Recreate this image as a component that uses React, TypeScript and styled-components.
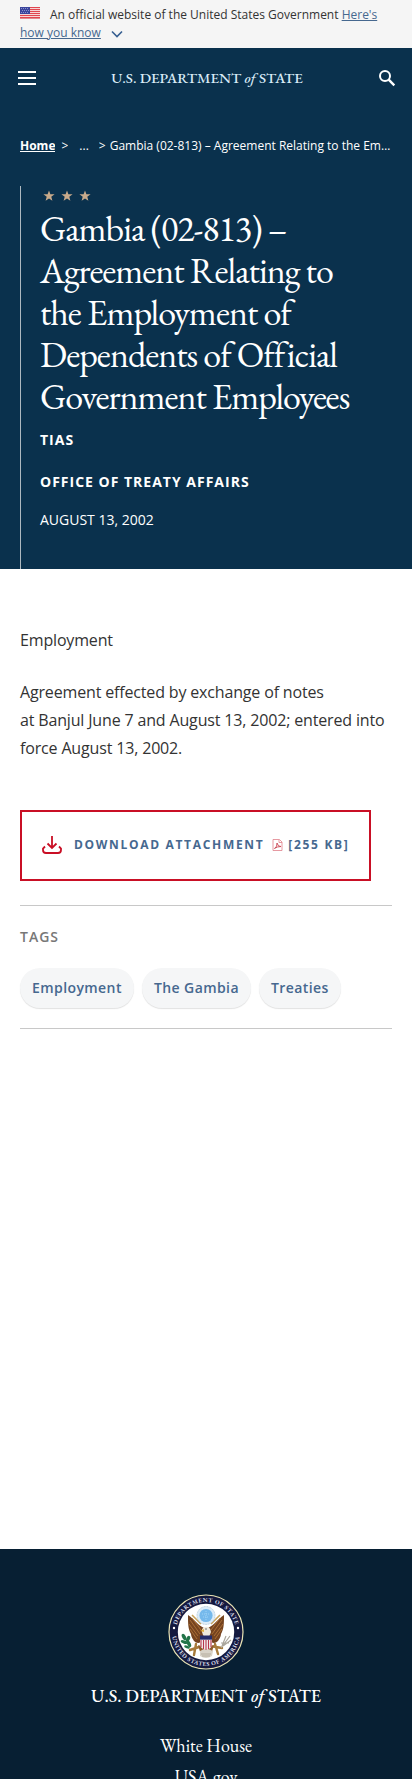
import React from "react";
import styled, { createGlobalStyle } from "styled-components";

const sans = `"Open Sans", "Noto Sans", sans-serif`;
const serif = `"EB Garamond", "Liberation Serif", serif`;
const navy = "#0a314d";
const link = "#46688f";
const red = "#c90f25";

const GlobalStyle = createGlobalStyle`
  *, *::before, *::after { box-sizing: border-box; }
  body { margin: 0; background: #fff; color: #333; font-family: ${sans}; }
  h1, p, ul, ol { margin: 0; padding: 0; }
  ul, ol { list-style: none; }
`;

const Page = styled.div`
  display: flex;
  flex-direction: column;
  height: 100vh;
  overflow: hidden;
`;

const Banner = styled.aside`
  flex: none;
  padding: 6px 20px;
  background: #f5f5f5;
  font-size: 12px;
  line-height: 18px;
`;

const Flag = styled.svg`
  width: 20px;
  height: 12px;
  margin-right: 10px;
`;

const BannerLink = styled.a`
  color: ${link};
  text-decoration: underline;
`;

const Chevron = styled.svg`
  width: 12px;
  height: 8px;
  margin-left: 10px;
  vertical-align: -1px;
`;

const Masthead = styled.div`
  flex: none;
  background: ${navy};
  color: #fff;
`;

const Header = styled.header`
  display: flex;
  align-items: center;
  justify-content: space-between;
  height: 60px;
  padding: 0 16px 0 18px;
`;

const IconButton = styled.button`
  display: flex;
  padding: 0;
  border: 0;
  background: none;
  color: #fff;
  cursor: pointer;
`;

const Wordmark = styled.a<{ $large?: boolean }>`
  color: ${(p) => (p.$large ? "#fff" : "#d9ebf7")};
  font-family: ${serif};
  font-size: ${(p) => (p.$large ? 18 : 15)}px;
  font-weight: 500;
  line-height: 24px;
  text-decoration: none;
  white-space: nowrap;
`;

const Breadcrumbs = styled.nav`
  padding: 28px 20px;

  ol {
    display: flex;
    font-size: 12px;
    line-height: 20px;
  }
`;

const Crumb = styled.li<{ $gap?: number; $current?: boolean }>`
  flex: ${(p) => (p.$current ? "1" : "none")};
  min-width: 0;
  margin-right: ${(p) => p.$gap ?? 0}px;
  overflow: hidden;
  text-overflow: ellipsis;
  white-space: nowrap;

  a {
    color: #fff;
    font-weight: 700;
  }
`;

const Hero = styled.section`
  margin: 2px 20px 0;
  padding: 3px 20px 38px 19px;
  border-left: 1px solid #aeb9c0;
`;

const Stars = styled.svg`
  display: block;
  width: 52px;
  height: 14px;
`;

const Title = styled.h1`
  margin: 5px 0 11px;
  font-family: ${serif};
  font-size: 36px;
  font-weight: 400;
  letter-spacing: -1px;
  line-height: 42px;
`;

const Office = styled.p`
  margin-bottom: 20px;
  font-size: 14px;
  font-weight: 700;
  letter-spacing: 1px;
  line-height: 22px;
  text-transform: uppercase;

  &:last-of-type { margin-bottom: 16px; }
`;

const Published = styled.time`
  display: block;
  font-size: 14px;
  line-height: 22px;
  text-transform: uppercase;
`;

const Content = styled.main`
  flex: none;
  padding: 57px 20px 520px;
`;

const Copy = styled.p`
  font-size: 16px;
  letter-spacing: -0.01em;
  line-height: 28px;

  & + & { margin-top: 24px; }
`;

const Download = styled.a`
  display: inline-flex;
  align-items: center;
  margin-top: 48px;
  padding: 0 20px 2px;
  height: 71px;
  border: 2px solid ${red};
  color: ${link};
  font-size: 12px;
  font-weight: 700;
  letter-spacing: 0.14em;
  line-height: 20px;
  text-decoration: none;
  text-transform: uppercase;
  white-space: nowrap;
`;

const DownloadLabel = styled.span`
  margin: 0 8px 0 12px;
`;

const FileSize = styled.span`
  margin-left: 5px;
`;

const Tags = styled.section`
  margin-top: 24px;
  padding: 20px 0;
  border: solid #c8c8c8;
  border-width: 1px 0;
`;

const TagsHeading = styled.h2`
  margin: 0;
  color: #777;
  font-size: 14px;
  font-weight: 600;
  letter-spacing: 1px;
  line-height: 22px;
`;

const TagList = styled.ul`
  display: flex;
  flex-wrap: wrap;
  gap: 8px;
  margin-top: 20px;
`;

const Tag = styled.a`
  display: block;
  padding: 9px 12px;
  border-radius: 20px;
  background: #f5f6f7;
  box-shadow: 0 1px 1px #e2e2e2;
  color: ${link};
  font-size: 14px;
  font-weight: 600;
  letter-spacing: 0.03em;
  line-height: 22px;
  text-decoration: none;
`;

const Footer = styled.footer`
  flex: none;
  display: flex;
  flex-direction: column;
  align-items: center;
  padding: 45px 20px 40px;
  background: #071f33;
  color: #fff;
`;

const SealArt = styled.svg`
  width: 76px;
  height: 76px;
  margin-bottom: 14px;
`;

const FooterLinks = styled.ul`
  margin-top: 22px;
  font-family: ${serif};
  font-size: 18px;
  line-height: 31px;
  text-align: center;

  a {
    color: #fff;
    text-decoration: none;
  }
`;

const starPath = "M0-5.6 1.4-1.8 5.6-1.7 2.3 .8 3.4 4.8 0 2.5-3.4 4.8-2.3 .8-5.6-1.7-1.4-1.8Z";

function UsFlag() {
  return (
    <Flag viewBox="0 0 20 12" aria-label="U.S. flag" role="img">
      <rect width="20" height="12" fill="#f6d5d5" />
      {[0, 2, 4, 6, 8, 10].map((y) => (
        <rect key={y} y={y} width="20" height="1" fill="#e0454f" />
      ))}
      <rect y="11" width="20" height="1" fill="#e58a8f" />
      <rect width="10" height="7" fill="#3b459c" />
      {[1, 3, 5].map((y) =>
        [1, 3, 5, 7].map((x) => <rect key={`${x}-${y}`} x={x + (y === 3 ? 1 : 0)} y={y} width="1" height="1" fill="#8790cf" />)
      )}
    </Flag>
  );
}

function Wing() {
  return (
    <g>
      <path d="M-2-4C-8-7-11-12-18-17-18-9-18-3-15 2-15 5-13 7-12 9-9 12-6 11-3 9Z" fill="#75431f" />
      <path d="M-16-12-6 2M-17-8-8 4M-16-3-9 7M-14-14-5-2" stroke="#b77a3c" strokeWidth=".8" fill="none" />
      <path d="M-5-8-14-17" stroke="#c9a35a" strokeWidth="1.6" />
    </g>
  );
}

function Seal() {
  return (
    <SealArt viewBox="-38 -38 76 76" role="img" aria-label="Seal of the U.S. Department of State">
      <defs>
        <path id="ring-top" d="M-30 0A30 30 0 0 1 30 0" />
        <path id="ring-bottom" d="M-34 0A34 34 0 0 0 34 0" />
      </defs>
      <circle r="37" fill="#14193f" stroke="#e9e3b4" strokeWidth="1.2" />
      <circle r="28.2" fill="#fff" />
      <g fill="#d5d8e6" fontFamily={serif} fontSize="6" fontWeight="700" letterSpacing=".5" textAnchor="middle">
        <text><textPath href="#ring-top" startOffset="50%">DEPARTMENT OF STATE</textPath></text>
        <text><textPath href="#ring-bottom" startOffset="50%">UNITED STATES OF AMERICA</textPath></text>
      </g>
      <circle cx="-32" cy="-4" r="1.2" fill="#fff" />
      <circle cx="32" cy="-4" r="1.2" fill="#fff" />
      <Wing />
      <g transform="scale(-1 1)"><Wing /></g>
      <circle cy="-16.5" r="9" fill="#dcecf8" stroke="#a7bfd2" strokeWidth=".8" strokeDasharray="1 .6" />
      <circle cy="-16.5" r="6.6" fill="#75b9ec" />
      <path d="M-4-18H4M-3-15H3M0-21V-12" stroke="#a9d8f7" strokeWidth=".8" strokeDasharray="1 1" />
      <path d="M-4 14-16 18M4 14 16 16M-10 12-12 23M9 12 12 22" stroke="#a77a3a" strokeWidth="2.4" strokeLinecap="round" />
      <path d="M-8 13Q0 20 8 13L5 23H-5Z" fill="#8f5b2c" />
      <path d="M-6 19Q0 15 7 19L6 24Q0 28-6 24Z" fill="#d9d3c8" />
      <path d="M-5 22H5M-4 24H4" stroke="#a89d8c" strokeWidth=".7" />
      <path d="M-3 3Q-6-4-1-5 4-6 5 0L3 5Z" fill="#eeeade" />
      <path d="M-2-3-6-1-2 0Z" fill="#e1b042" />
      <circle cx="0" cy="-3" r=".7" fill="#444" />
      <path d="M-6 5H6V13Q5 17 0 18-5 17-6 13Z" fill="#f4f0f1" />
      <path d="M-5 8V15M-2.5 8V17M0 8V18M2.5 8V17M5 8V15" stroke="#b7354b" strokeWidth="1.1" />
      <rect x="-6" y="3.5" width="12" height="4.2" fill="#252d6b" />
      <g fill="#237449">
        <ellipse cx="-22" cy="5" rx="1.8" ry="3.4" transform="rotate(-30 -22 5)" />
        <ellipse cx="-18" cy="7" rx="1.8" ry="3.4" transform="rotate(25 -18 7)" />
        <ellipse cx="-22" cy="10" rx="1.6" ry="3.4" transform="rotate(-70 -22 10)" />
        <ellipse cx="-17" cy="12" rx="1.8" ry="3.4" transform="rotate(-25 -17 12)" />
        <ellipse cx="-19" cy="15" rx="1.4" ry="3" transform="rotate(-70 -19 15)" />
      </g>
      <path d="M15 16 24 4M16 14 20 4M17 14 25 8M15 11 23 11" stroke="#aaa69c" strokeWidth="1.2" />
    </SealArt>
  );
}

export default function App() {
  return (
    <>
      <GlobalStyle />
      <Page>
        <Banner>
          <UsFlag />
          An official website of the United States Government{" "}
          <BannerLink href="#how-you-know">Here's how you know</BannerLink>
          <Chevron viewBox="0 0 12 8" aria-hidden="true">
            <path d="M1 1.5 6 6.5 11 1.5" fill="none" stroke="#365f91" strokeWidth="1.6" />
          </Chevron>
        </Banner>

        <Masthead>
          <Header>
            <IconButton type="button" aria-label="Menu">
              <svg width="18" height="14" viewBox="0 0 18 14">
                <path d="M0 1H18M0 7H18M0 13H18" stroke="currentColor" strokeWidth="2" />
              </svg>
            </IconButton>
            <Wordmark href="#home">U.S. DEPARTMENT <em>of</em> STATE</Wordmark>
            <IconButton type="button" aria-label="Search">
              <svg width="18" height="18" viewBox="0 0 18 18" fill="none" stroke="currentColor">
                <circle cx="7" cy="7" r="5" strokeWidth="2" />
                <path d="M10.7 10.7 16.3 16.3" strokeWidth="2.4" />
              </svg>
            </IconButton>
          </Header>

          <Breadcrumbs aria-label="Breadcrumb">
            <ol>
              <Crumb $gap={6}><a href="#home">Home</a></Crumb>
              <Crumb $gap={11} aria-hidden="true">&gt;</Crumb>
              <Crumb $gap={10}>...</Crumb>
              <Crumb $gap={4} aria-hidden="true">&gt;</Crumb>
              <Crumb $current aria-current="page">
                Gambia (02-813) – Agreement Relating to the Employment of Dependents of Official Government Employees
              </Crumb>
            </ol>
          </Breadcrumbs>

          <Hero>
            <Stars viewBox="0 0 52 14" aria-hidden="true">
              {[9, 27, 45].map((x) => (
                <path key={x} d={starPath} fill="#c8aa8b" transform={`translate(${x} 7)`} />
              ))}
            </Stars>
            <Title>
              Gambia (02-813) – Agreement Relating to the Employment of Dependents of Official Government Employees
            </Title>
            <Office>TIAS</Office>
            <Office>Office of Treaty Affairs</Office>
            <Published dateTime="2002-08-13">August 13, 2002</Published>
          </Hero>
        </Masthead>

        <Content>
          <Copy>Employment</Copy>
          <Copy>
            Agreement effected by exchange of notes at&nbsp;Banjul June 7 and August 13, 2002; entered into force
            August 13, 2002.
          </Copy>
          <Download href="#attachment">
            <svg width="20" height="18" viewBox="0 0 20 18" fill="none" stroke={red} strokeWidth="1.8" aria-hidden="true">
              <path d="M10 0V12M5.5 7.5 10 12 14.5 7.5" />
              <path d="M3 10.5 1 12.5V14Q1 17 4 17H16Q19 17 19 14V12.5L17 10.5" />
            </svg>
            <DownloadLabel>Download Attachment</DownloadLabel>
            <svg width="11" height="12" viewBox="0 0 11 12" fill="none" stroke="#e0808a" aria-hidden="true">
              <path d="M1 .5H7.5L10 3V11.5H1ZM7 1V3.5H10" strokeWidth=".8" />
              <path d="M2.5 9.5Q5.5 7.5 5 4 6 8 9 7.5 5 7.5 2.5 9.5" stroke="#c94350" strokeWidth=".9" />
            </svg>
            <FileSize>[255 KB]</FileSize>
          </Download>

          <Tags>
            <TagsHeading>TAGS</TagsHeading>
            <TagList>
              <li><Tag href="#employment">Employment</Tag></li>
              <li><Tag href="#gambia">The Gambia</Tag></li>
              <li><Tag href="#treaties">Treaties</Tag></li>
            </TagList>
          </Tags>
        </Content>

        <Footer>
          <Seal />
          <Wordmark $large href="#home">U.S. DEPARTMENT <em>of</em> STATE</Wordmark>
          <FooterLinks>
            <li><a href="#whitehouse">White House</a></li>
            <li><a href="#usagov">USA.gov</a></li>
          </FooterLinks>
        </Footer>
      </Page>
    </>
  );
}
